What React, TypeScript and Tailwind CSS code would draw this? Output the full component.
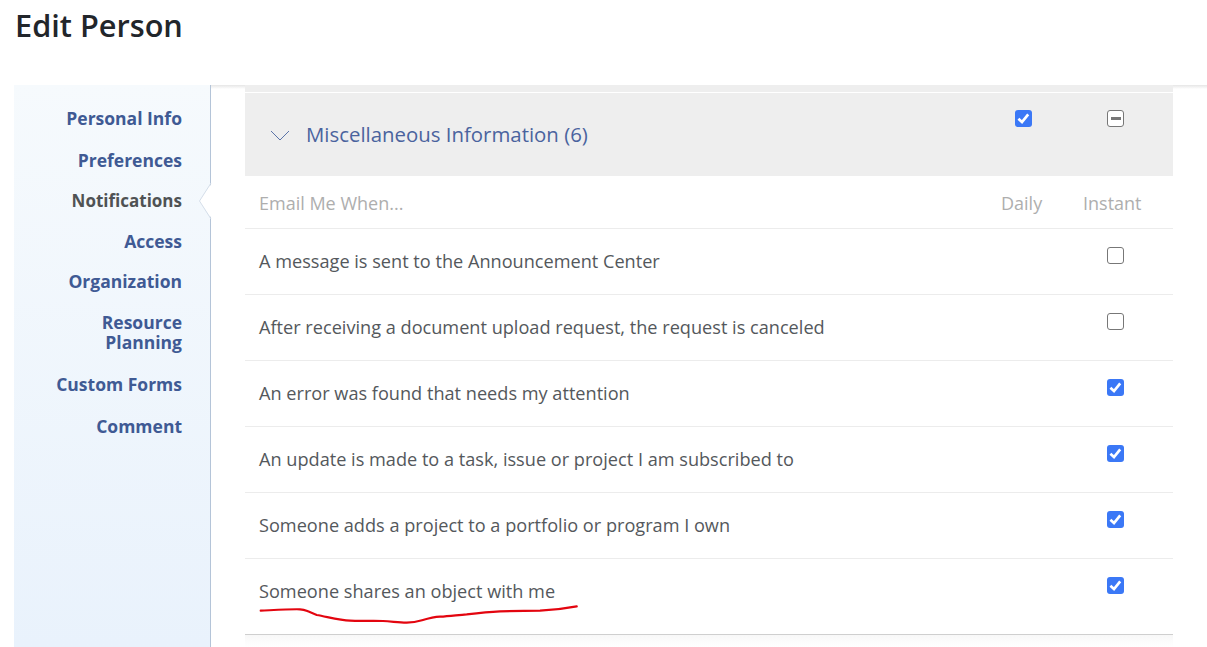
import React from 'react';

const navItems = [
  { label: 'Personal Info', top: 'mt-[23px]' },
  { label: 'Preferences', top: 'mt-[22px]' },
  { label: 'Notifications', top: 'mt-[21px]', active: true },
  { label: 'Access', top: 'mt-[20px]' },
  { label: 'Organization', top: 'mt-[20px]' },
  { label: 'Resource Planning', top: 'mt-[21px] pl-[60px]' },
  { label: 'Custom Forms', top: 'mt-[22px]' },
  { label: 'Comment', top: 'mt-[22px]' },
];

const rows = [
  { text: 'A message is sent to the Announcement Center', checked: false },
  { text: 'After receiving a document upload request, the request is canceled', checked: false },
  { text: 'An error was found that needs my attention', checked: true },
  { text: 'An update is made to a task, issue or project I am subscribed to', checked: true },
  { text: 'Someone adds a project to a portfolio or program I own', checked: true },
  { text: 'Someone shares an object with me', checked: true },
];

const CheckBox: React.FC<{ state: 'on' | 'off' | 'mixed' }> = ({ state }) => {
  if (state === 'on') {
    return (
      <span className="flex h-[17px] w-[17px] items-center justify-center rounded-[3px] bg-[#3b78f6]">
        <svg viewBox="0 0 17 17" className="h-[17px] w-[17px]" fill="none">
          <path d="M3.4 8.8 L7 12 L13.2 4.4" stroke="#fff" strokeWidth="2.7" />
        </svg>
      </span>
    );
  }
  return (
    <span className="flex h-[17px] w-[17px] items-center justify-center rounded-[3px] border border-[#777] bg-white">
      {state === 'mixed' && <span className="h-[3px] w-[10px] bg-[#777]" />}
    </span>
  );
};

const App: React.FC = () => {
  return (
    <div className="relative h-[647px] w-[1207px] overflow-hidden bg-white font-['Open_Sans',sans-serif]">
      <div className="h-[85px] pl-[15px] pt-[4px]">
        <h1 className="text-[30.7px] font-semibold leading-[43px] text-[#22262b]">Edit Person</h1>
      </div>

      <div className="flex h-[562px]">
        <nav className="ml-[14px] h-full w-[197px] shrink-0 border-r border-[#b4c4d8] bg-gradient-to-b from-[#f6fafd] to-[#e9f2fc] pr-[28px] text-right">
          {navItems.map((item) => (
            <div
              key={item.label}
              className={`${item.top} font-bold leading-[20px] ${
                item.active ? 'text-[17px] text-[#4f5254]' : 'text-[17.5px] text-[#3f5a94]'
              }`}
            >
              {item.label}
            </div>
          ))}
        </nav>

        <main className="relative flex-1 bg-gradient-to-b from-[#e6e6e6] to-white to-[4px]">
          <div className="ml-[34px] w-[928px] bg-white">
            <div className="h-[7px] bg-[#eeeeee]" />
            <div className="h-[1px] bg-white" />
            <div className="relative flex h-[83px] bg-[#eeeeee] pl-[25px]">
              <svg viewBox="0 0 20 12" className="mt-[37px] h-[12px] w-[20px]" fill="none">
                <path d="M1 1 L10 10 L19 1" stroke="#5b74a8" strokeWidth="1" />
              </svg>
              <span className="ml-[16px] mt-[28px] text-[20.4px] leading-[27px] text-[#4a639e]">
                Miscellaneous Information (6)
              </span>
              <span className="absolute left-[770px] top-[17px]">
                <CheckBox state="on" />
              </span>
              <span className="absolute left-[862px] top-[17px]">
                <CheckBox state="mixed" />
              </span>
            </div>
            <div className="flex h-[53px] items-center border-b border-[#ececec] pl-[14px] pt-[2px] text-[18px] text-[#aeaeae]">
              <span className="flex-1">Email Me When...</span>
              <span className="w-[82px]">Daily</span>
              <span className="w-[90px]">Instant</span>
            </div>
            {rows.map((row, i) => (
              <div
                key={row.text}
                className={`flex items-start justify-between pl-[14px] pr-[49px] ${
                  i === rows.length - 1 ? 'h-[76px] border-b border-[#cfcfcf]' : 'h-[66px] border-b border-[#ececec]'
                }`}
              >
                <span className="mt-[20px] text-[18.15px] leading-[24px] text-[#54585c]">{row.text}</span>
                <span className="mt-[18px]">
                  <CheckBox state={row.checked ? 'on' : 'off'} />
                </span>
              </div>
            ))}
            <div className="h-[12px] bg-gradient-to-b from-[#f8f8f8] to-white" />
          </div>
        </main>
      </div>

      {/* active nav caret */}
      <svg viewBox="0 0 14 36" className="absolute left-[198px] top-[183px] h-[36px] w-[14px]" fill="none">
        <path d="M14 0 L1.5 18 L14 36 Z" fill="#fff" />
        <path d="M13 0 L1.5 18 L13 36" stroke="#d5dee9" strokeWidth="1" />
      </svg>

      {/* hand drawn underline */}
      <svg viewBox="0 0 1207 647" className="pointer-events-none absolute left-0 top-0 h-[647px] w-[1207px]" fill="none">
        <path
          d="M260.7 610.7 C275 610 290 609 300 609.3 C304 609.5 306 610.5 308 611.3 L316.7 615 C328 617 340 620 350 620.7 C362 621.3 372 620.5 383 621 C392 621.5 400 622.8 406.7 622.7 C413 622.6 418 621.5 422 620.3 C430 618 434 617 440 616.7 C450 616 458 615 466.7 614.3 C478 613 490 611.8 500 611.3 C515 611 528 611 540 610.7 C552 610 565 608.5 576.7 606.3"
          stroke="#e3050f"
          strokeWidth="2.2"
          strokeLinecap="round"
        />
      </svg>
    </div>
  );
};

export default App;
